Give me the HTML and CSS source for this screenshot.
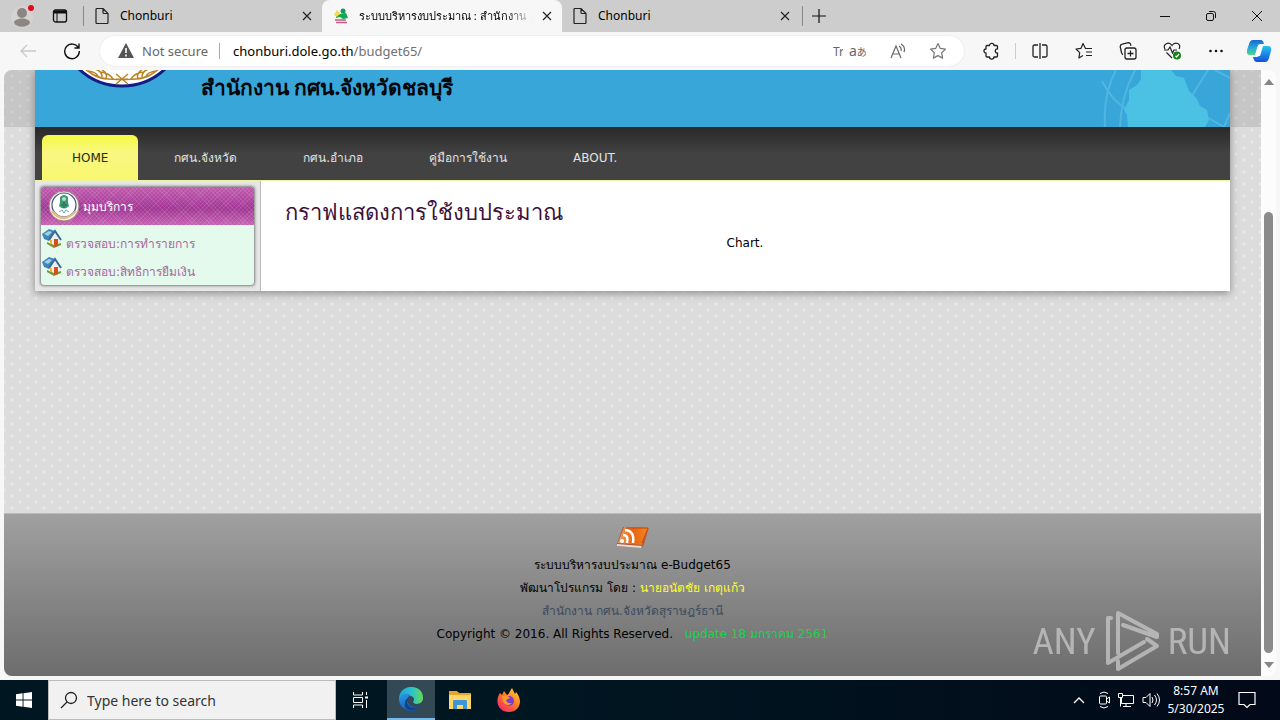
FILE: index.html
```html
<!DOCTYPE html>
<html lang="th">
<head>
<meta charset="utf-8">
<title>ระบบบริหารงบประมาณ</title>
<link rel="stylesheet" href="styles.css">
</head>
<body>
<div class="tabbar">
  <button class="profile" aria-label="Profile"><svg width="24" height="26" viewBox="0 0 24 26"><circle cx="12" cy="14" r="11" fill="#d6d2cf"/><circle cx="12" cy="10" r="5" fill="#8b8684"/><path d="M4 20c0-6 16-6 16 0-3 5-13 5-16 0z" fill="#8b8684"/><circle cx="21" cy="5" r="3" fill="#e00b1c"/></svg></button>
  <button class="spaces" aria-label="Tab actions"><svg width="16" height="16" viewBox="0 0 16 16" fill="none" stroke="#111"><rect x="1.500" y="2" width="13" height="12" rx="2" stroke-width="1.300"/><path d="M1.500 4h13" stroke-width="3"/><path d="M5 5v9"/></svg></button>
  <span class="sep"></span>
  <div class="tab first"><svg class="fav" width="16" height="16" viewBox="0 0 16 16" fill="none" stroke="#222" stroke-width="1.200"><path d="M2 1.500q0-1 1-1h6l5 5v9q0 1-1 1H3q-1 0-1-1zM9 .5v4q0 1 1 1h4"/></svg><span class="label">Chonburi</span><button aria-label="Close tab"><svg width="10" height="10" viewBox="0 0 10 10" stroke="#222" stroke-width="1.200"><path d="M1 1l8 8M9 1L1 9"/></svg></button></div>
  <div class="tab active"><svg class="fav" width="16" height="16" viewBox="0 0 16 16"><circle cx="10" cy="3" r="2.500" fill="#159a55"/><path d="M3 8c4-2 6-3 10-3l2 5-5 1-3-2-4 1z" fill="#15a557"/><path d="M1 7l3-5 3 3-3 4z" fill="#f2dd44"/><path d="M2 12h11M3 14.500h11" stroke="#c45b82" stroke-width="1.500"/></svg><span class="label">ระบบบริหารงบประมาณ : สำนักงาน กศน</span><button aria-label="Close tab"><svg width="10" height="10" viewBox="0 0 10 10" stroke="#222" stroke-width="1.200"><path d="M1 1l8 8M9 1L1 9"/></svg></button></div>
  <div class="tab"><svg class="fav" width="16" height="16" viewBox="0 0 16 16" fill="none" stroke="#222" stroke-width="1.200"><path d="M2 1.500q0-1 1-1h6l5 5v9q0 1-1 1H3q-1 0-1-1zM9 .5v4q0 1 1 1h4"/></svg><span class="label">Chonburi</span><button aria-label="Close tab"><svg width="10" height="10" viewBox="0 0 10 10" stroke="#222" stroke-width="1.200"><path d="M1 1l8 8M9 1L1 9"/></svg></button></div>
  <span class="sep"></span>
  <button class="newtab" aria-label="New tab"><svg width="14" height="14" viewBox="0 0 14 14" stroke="#111" stroke-width="1.200"><path d="M7 0v14M0 7h14"/></svg></button>
  <div class="wincontrols">
    <button aria-label="Minimize"><svg width="12" height="12" viewBox="0 0 12 12"><path d="M1 6.500h10" stroke="#111"/></svg></button>
    <button aria-label="Restore"><svg width="12" height="12" viewBox="0 0 12 12" fill="none" stroke="#111"><rect x="1.500" y="3.500" width="7" height="7" rx="1.500"/><path d="M4 1.500h4.500q2 0 2 2V8"/></svg></button>
    <button aria-label="Close"><svg width="12" height="12" viewBox="0 0 12 12" stroke="#111"><path d="M1 1l10 10M11 1L1 11"/></svg></button>
  </div>
</div>

<div class="toolbar">
  <button aria-label="Back"><svg width="18" height="16" viewBox="0 0 18 16" fill="none" stroke="#c8c8c8" stroke-width="1.300"><path d="M17 8H2M8 2L2 8l6 6"/></svg></button>
  <button aria-label="Refresh"><svg width="18" height="18" viewBox="0 0 18 18" fill="none" stroke="#111" stroke-width="1.400"><path d="M15.500 6A7.300 7.300 0 1 0 16.300 9M16 1.500V6h-4.500"/></svg></button>
  <div class="address">
    <svg width="16" height="16" viewBox="0 0 16 16"><path d="M8 0l8 15H0z" fill="#555" stroke-linejoin="round"/><path d="M8 5v5M8 11.500v2" stroke="#fff" stroke-width="1.600"/></svg>
    <span class="notsecure">Not secure</span><span class="bar"></span>
    <span class="url">chonburi.dole.go.th<span>/budget65/</span></span>
    <span class="clip">Tr</span>
    <span class="translate">a<small>あ</small></span>
    <svg class="read" width="17" height="16" viewBox="0 0 17 16" fill="none" stroke="#666" stroke-width="1.200"><path d="M1 15L6 3l5 12M3 11h6M9 3q3 2 2 5M11 1q5 3 3 8"/></svg>
    <svg width="18" height="18" viewBox="0 0 18 18" fill="none" stroke="#777" stroke-width="1.200" stroke-linejoin="round"><path d="M9 1.500l2.300 4.900 5.200.7-3.800 3.700.9 5.300L9 13.600l-4.600 2.500.9-5.300L1.500 7.100l5.200-.7z"/></svg>
  </div>
  <div class="tools">
    <button aria-label="Extensions"><svg width="18" height="18" viewBox="0 0 18 18" fill="none" stroke="#222" stroke-width="1.300" stroke-linejoin="round"><path d="M4 3.500h2.500C6.500.7 11 .7 11 3.500h2.500q1 0 1 1V7c-3-.5-3 4.500 0 4v3q0 1-1 1H11c0 2.700-4.500 2.700-4.500 0H4q-1 0-1-1v-3c-2.700 0-2.700-4 0-4V4.500q0-1 1-1z"/></svg></button>
    <span class="bar"></span>
    <button aria-label="Split screen"><svg width="18" height="18" viewBox="0 0 18 18" fill="none" stroke="#222" stroke-width="1.300"><path d="M7 3H3.500Q2 3 2 4.500v9Q2 15 3.500 15H7M11 3h3.500Q16 3 16 4.500v9q0 1.500-1.500 1.500H11M9 1v16"/></svg></button>
    <button aria-label="Favorites"><svg width="18" height="18" viewBox="0 0 18 18" fill="none" stroke="#222" stroke-width="1.200" stroke-linejoin="round"><path d="M17 6.500h-6.500L8 1.500 6 6.300l-5 .7 3.700 3.600-.8 5.400L8 13.500M11 10h6M11 13.500h6"/></svg></button>
    <button aria-label="Collections"><svg width="18" height="18" viewBox="0 0 18 18" fill="none" stroke="#222" stroke-width="1.300"><rect x="6" y="6" width="11" height="11" rx="2"/><path d="M11.500 8.500v6M8.500 11.500h6M4 12.500q-1 0-1.500-2L1.200 4.700q0-2 2-2.500l6-1.500q2 0 2.500 2l.3 1"/></svg></button>
    <button aria-label="Performance"><svg width="18" height="18" viewBox="0 0 18 18" fill="none" stroke="#222" stroke-width="1.200"><path d="M2 7C-1 2 6-1 9 3.500c3-4.500 10-2 7 3.500M3.500 10.500L9 16M1 8h4l2-3 2.500 6L11 8h3"/><circle cx="14" cy="13.500" r="4" fill="#16801b" stroke="none"/><path d="M12.500 14l1 1 2.500-3" stroke="#fff"/></svg></button>
    <button aria-label="Settings and more"><svg width="18" height="18" viewBox="0 0 18 18" fill="#111"><circle cx="3.500" cy="9" r="1.300"/><circle cx="9" cy="9" r="1.300"/><circle cx="14.500" cy="9" r="1.300"/></svg></button>
    <button class="copilot" aria-label="Copilot"><svg width="26" height="24" viewBox="0 0 26 24"><defs><linearGradient id="ca" x2="0" y2="1"><stop stop-color="#1967d2"/><stop offset=".5" stop-color="#24a8d8"/><stop offset="1" stop-color="#52d48a"/></linearGradient><linearGradient id="cb" x2="0" y2="1"><stop stop-color="#27c4ee"/><stop offset="1" stop-color="#1450dc"/></linearGradient></defs><path d="M7 1h8q2 0 3 4h-4q-2 0-3 4l-2 7H4q-4 0-3-5l2-6q1-4 4-4z" fill="url(#ca)"/><path d="M19 23h-8q-3 0-4-5h4q2 0 3-4l2-7h6q4 0 3 5l-2 7q-1 4-4 4z" fill="url(#cb)"/><path d="M14 7h3l-3 10h-4z" fill="#fff"/></svg></button>
  </div>
</div>

<div class="viewport">
  <div class="page">
    <div class="wrap">
      <header class="banner">
        <svg class="seal" width="120" height="18" viewBox="0 0 120 18"><circle cx="60" cy="-47" r="63" fill="#fff" stroke="#151c83" stroke-width="3"/><g fill="none" stroke="#b98524" stroke-width="1.500"><path d="M24 0Q38 12 66 9M96 0Q82 12 54 9M54 14L66 4M66 14L54 4M26 1q8 1 10 5M33-1q7 2 7 8M40 0q6 3 4 9M38 2q10 1 14 8M30 4q8 5 16 5M94 1q-8 1-10 5M87-1q-7 2-7 8M80 0q-6 3-4 9M82 2q-10 1-14 8M90 4q-8 5-16 5"/></g></svg>
        <h1>สำนักงาน กศน.จังหวัดชลบุรี</h1>
        <svg class="map" width="134" height="57" viewBox="0 0 134 57"><g fill="none" stroke="#51b5e2" stroke-width="2"><path d="M6 11q10 20 26 29M20 0Q7 24 9 57M39 0Q25 26 24 57M112 0L94 29M119 0l15 8M106 44l22 13 6-14"/></g><path d="M45 0h30l5 6 8 2 5 13 8 8 3 7 7 4 2 10-4 7H32l-1-12-3-5 5-10 0-10 8-5 4-6z" fill="#4bc2e3"/></svg>
      </header>
      <nav class="menu">
        <a class="current" href="#">HOME</a><a href="#">กศน.จังหวัด</a><a href="#">กศน.อำเภอ</a><a href="#">คู่มือการใช้งาน</a><a href="#">ABOUT.</a>
      </nav>
      <div class="columns">
        <aside class="side">
          <section class="service">
            <h2><svg width="32" height="32" viewBox="0 0 32 32"><circle cx="16" cy="16" r="15" fill="#faf5ee" stroke="#a08773"/><circle cx="16" cy="15" r="12" fill="#fff" stroke="#44548b" stroke-width="1.200"/><path d="M4 21q11 14 24 0" fill="none" stroke="#e3bd92" stroke-width="2.500"/><path d="M12 7q4-4 8 0v5l1 4q-5 5-10 0l1-4z" fill="#3c9a76"/><circle cx="16" cy="9" r="2" fill="#b9ddc2"/><path d="M16 12v6M14 14v2M18 14v2" stroke="#20654e"/><path d="M11 22l3-2 2 3 2-3 3 2" fill="none" stroke="#6aa5c8"/></svg>มุมบริการ</h2>
            <ul>
              <li><svg width="20" height="20" viewBox="0 0 20 20"><path d="M6 10l7-5 6 6v6l-7 3-7-4z" fill="#f1eee5"/><path d="M5 16l7 4 7-3v-2l-7 2-7-3z" fill="#6f9c3c"/><path d="M0 6l7-5 6 2-6 10-5-2z" fill="#3f86bb"/><path d="M2 6l5-3 3 1-4 4z" fill="#9fd0e6"/><path d="M7 12l6-9 6 9" fill="none" stroke="#356c98" stroke-width="2"/><path d="M12 11h4v7l-4 1z" fill="#d6501f"/><path d="M8 12h2v4H8z" fill="#f5b534"/></svg><a href="#">ตรวจสอบ:การทำรายการ</a></li>
              <li><svg width="20" height="20" viewBox="0 0 20 20"><path d="M6 10l7-5 6 6v6l-7 3-7-4z" fill="#f1eee5"/><path d="M5 16l7 4 7-3v-2l-7 2-7-3z" fill="#6f9c3c"/><path d="M0 6l7-5 6 2-6 10-5-2z" fill="#3f86bb"/><path d="M2 6l5-3 3 1-4 4z" fill="#9fd0e6"/><path d="M7 12l6-9 6 9" fill="none" stroke="#356c98" stroke-width="2"/><path d="M12 11h4v7l-4 1z" fill="#d6501f"/><path d="M8 12h2v4H8z" fill="#f5b534"/></svg><a href="#">ตรวจสอบ:สิทธิการยืมเงิน</a></li>
            </ul>
          </section>
        </aside>
        <main>
          <h2>กราฟแสดงการใช้งบประมาณ</h2>
          <p>Chart.</p>
        </main>
      </div>
    </div>
    <footer>
      <svg width="34" height="24" viewBox="0 0 34 24"><defs><linearGradient id="r" x2="1"><stop stop-color="#f0a060"/><stop offset=".5" stop-color="#e96511"/><stop offset="1" stop-color="#f18b20"/></linearGradient></defs><path d="M1 18L7 1h26l-5 17-2 4L1 20z" fill="#a9573c"/><path d="M2 17L8 1h25l-7 18z" fill="url(#r)"/><path d="M10 2h22l-6 15" fill="none" stroke="#c8440b"/><path d="M1 18l25 2-1 2L1 20z" fill="#eadbd4"/><g fill="none" stroke="#fff" stroke-width="2.500"><path d="M7 9q6 0 4 8M9 4q10 1 8 13"/></g><circle cx="6" cy="15" r="2" fill="#fff"/></svg>
      <p>ระบบบริหารงบประมาณ e-Budget65</p>
      <p>พัฒนาโปรแกรม โดย : <span class="author">นายอนัตชัย เกตุแก้ว</span></p>
      <p class="office">สำนักงาน กศน.จังหวัดสุราษฎร์ธานี</p>
      <p>Copyright © 2016. All Rights Reserved. <span class="update">update 18 มกราคม 2561</span></p>
    </footer>
  </div>
  <div class="scrollbar"><span class="up"></span><span class="thumb"></span><span class="down"></span></div>
  <div class="watermark"><span>ANY</span><svg width="56" height="62" viewBox="0 0 56 62" fill="none" stroke="currentColor" stroke-width="4" stroke-linejoin="round" stroke-linecap="round"><path d="M14 43V3l39 21v3L19 15M7 8H4v45l36-21M14 51v8l39-23-10-7"/></svg><span>RUN</span></div>
</div>

<div class="taskbar">
  <button class="start" aria-label="Start"><svg width="16" height="16" viewBox="0 0 16 16" fill="#fff"><path d="M0 2.200L6.600 1.300v6.200H0zM7.500 1.200L16 0v7.500H7.500zM0 8.400h6.600v6.300L0 13.800zM7.500 8.400H16V16l-8.500-1.200z"/></svg></button>
  <label class="search"><svg width="18" height="18" viewBox="0 0 18 18" fill="none" stroke="#222" stroke-width="1.300"><circle cx="11" cy="7" r="5.500"/><path d="M7 11l-6 6"/></svg><input type="text" placeholder="Type here to search" aria-label="Type here to search"></label>
  <button class="app" aria-label="Task view"><svg width="18" height="18" viewBox="0 0 18 18" fill="none" stroke="#fff"><path d="M1.500 1v3h9V1M1.500 17v-3h9v3M1.500 6.500h9v5h-9zM14.500 1v3M14.500 9v8"/><path d="M13 6.500h3" stroke-width="2"/></svg></button>
  <button class="app on" aria-label="Microsoft Edge"><svg width="24" height="24" viewBox="0 0 24 24"><defs><linearGradient id="ea"><stop stop-color="#23a5dc"/><stop offset=".55" stop-color="#2cc3cb"/><stop offset="1" stop-color="#68da52"/></linearGradient><linearGradient id="eb" x2=".5" y2="1"><stop stop-color="#2b9de8"/><stop offset="1" stop-color="#125bb5"/></linearGradient></defs><path d="M0 12C0-4 24-4 24 11c0 7-9 7-10 4 2-2 1-6-3-6C5 8 1 10 0 14z" fill="url(#ea)"/><path d="M0 12c2-6 9-7 12-3-4 0-5 4-3 7 2 4 7 5 12 3-4 6-11 6-15 3C2 20 0 16 0 12z" fill="url(#eb)"/><path d="M9 12c-3 7 5 11 12 7-5 7-17 5-15-3 0-3 1-4 3-4z" fill="#12458c"/></svg></button>
  <button class="app" aria-label="File Explorer"><svg width="22" height="20" viewBox="0 0 22 20"><path d="M0 1h8l2 2h12v16H0z" fill="#e8a52b"/><path d="M0 5h22v14H0z" fill="#ffd766"/><path d="M4 19v-8q0-1 1-1h12q1 0 1 1v8h-4v-4H8v4z" fill="#3f95d7"/></svg></button>
  <button class="app" aria-label="Firefox"><svg width="24" height="24" viewBox="0 0 24 24"><defs><linearGradient id="f" x1="1" x2=".2" y2="1"><stop stop-color="#ffe33d"/><stop offset=".5" stop-color="#ff7b25"/><stop offset="1" stop-color="#f4266c"/></linearGradient></defs><path d="M3 5l2 2 2-4 3 4c2-1 3-4 5-7l3 6 1-2c8 9 3 20-7 20S-3 14 3 5z" fill="url(#f)"/><circle cx="12" cy="13" r="5" fill="#7b3fcc"/><path d="M5 8q6-1 8 2l-4 2q1 4 6 3-5 5-9-1z" fill="#ff9a20"/></svg></button>
  <div class="tray">
    <svg width="12" height="8" viewBox="0 0 12 8" fill="none" stroke="#fff" stroke-width="1.300"><path d="M1 7l5-5 5 5"/></svg>
    <svg width="12" height="18" viewBox="0 0 12 18" fill="none" stroke="#fff"><rect x="1.500" y="5" width="7" height="8" rx="1"/><path d="M8.500 8l3-2v6l-3-2M2 2.500q4-3 8 0M2 15.500q4 3 8 0"/></svg>
    <svg width="18" height="16" viewBox="0 0 18 16" fill="none" stroke="#fff"><path d="M5 3.500h11.500v8H4.500V6M9 11.500v3M6 14.500h8M1.500 1.500h4v4h-4zM3.500 5.500v9"/></svg>
    <svg width="18" height="16" viewBox="0 0 18 16" fill="none" stroke="#fff"><path d="M1 5.500h3l4-4v13l-4-4H1zM10 5q2 3 0 6M12.500 3q4 5 0 10M15 1.500q5 6.500 0 13"/></svg>
    <div class="clock">8:57 AM<br>5/30/2025</div>
    <svg class="note" width="18" height="18" viewBox="0 0 18 18" fill="none" stroke="#fff" stroke-width="1.200"><path d="M1 1.500h16v12h-5l-3 3-3-3H1z"/></svg>
  </div>
</div>
</body>
</html>
```
FILE: styles.css
```css
* { box-sizing: border-box; }
body { margin: 0; height: 100vh; display: flex; flex-direction: column; overflow: hidden; background: #f7f7f7; font-family: "Noto Sans", "Open Sans", sans-serif; font-size: 12px; color: #000; }
button { border: 0; padding: 0; background: none; display: flex; align-items: center; justify-content: center; flex: none; }
h1, h2, p, ul { margin: 0; padding: 0; font-weight: 400; }
a { text-decoration: none; color: inherit; }
svg { flex: none; display: block; }

.tabbar { height: 32px; flex: none; display: flex; align-items: center; background: #cdcdcd; }
.profile { width: 24px; margin-left: 10px; }
.spaces { width: 16px; margin: 0 15px 0 18px; }
.sep { width: 1px; height: 20px; background: #888; flex: none; }
.tab { width: 240px; height: 32px; display: flex; align-items: center; gap: 10px; padding: 0 12px 0 10px; font-size: 12px; }
.tab.first { width: 238px; padding: 0 10px; }
.tab.active { background: #f7f7f7; border-radius: 8px 8px 0 0; padding: 0 10px 0 11px; }
.tab .label { flex: 1; min-width: 0; overflow: hidden; white-space: nowrap; line-height: 24px; }
.tab.active .label { font-size: 11px; mask-image: linear-gradient(90deg, #000 85%, transparent); }
.newtab { width: 32px; }
.wincontrols { display: flex; margin-left: auto; }
.wincontrols button { width: 46px; height: 32px; }

.toolbar { height: 38px; flex: none; display: flex; align-items: center; }
.toolbar > button { width: 44px; }
.toolbar > button:first-child { margin-left: 6px; }
.address { flex: 1; height: 30px; margin-left: 6px; border-radius: 15px; background: #fff; display: flex; align-items: center; padding: 0 17px 0 18px; box-shadow: 0 0 2px #ddd; font-size: 13px; color: #666; }
.notsecure { margin-left: 8px; }
.bar { width: 1px; height: 16px; background: #aaa; margin: 0 13px 0 11px; flex: none; }
.url { color: #000; flex: 1; }
.url span { color: #707070; }
.clip { width: 10px; overflow: hidden; margin-right: 6px; font-size: 12px; }
.translate { font-size: 14px; line-height: 20px; width: 18px; margin-right: 23px; white-space: nowrap; }
.translate small { font: 10px "Noto Sans CJK JP", sans-serif; }
.read { margin-right: 22px; }
.tools { display: flex; align-items: center; margin-left: 6px; }
.tools button { width: 44px; }
.tools .bar { margin: 0 2px 0 1px; background: #ccc; }
.tools .copilot { width: 42px; }

.viewport { flex: 1; min-height: 0; margin: 0 4px 4px; display: flex; position: relative; border-radius: 8px; overflow: hidden; }
.page { flex: 1; min-width: 0; display: flex; flex-direction: column; background-color: #dcdcdc; background-image: linear-gradient(#0000001a, #0000001a), radial-gradient(circle, #e8e8e8 1px, transparent 2px), radial-gradient(circle, #e8e8e8 1px, transparent 2px); background-size: 100% 57px, 16px 12px, 16px 12px; background-position: 0 0, 0 0, 8px 6px; background-repeat: no-repeat, repeat, repeat; font: 12px "DejaVu Sans", "Noto Sans", sans-serif; }
.wrap { margin: 0 31px; background: #fff; box-shadow: 0 2px 8px #888; }
.banner { height: 57px; background: #39a6da; display: flex; align-items: flex-start; overflow: hidden; }
.seal { margin-left: 27px; }
.banner h1 { font: 700 21px/34px "Noto Sans", sans-serif; margin-left: 19px; color: #00060c; white-space: nowrap; }
.map { margin-left: auto; }
.menu { height: 53px; padding: 8px 7px 0; display: flex; background: linear-gradient(#292929, #424242 50%); }
.menu a { padding: 0 33px; line-height: 47px; color: #e2e2e2; white-space: nowrap; }
.menu .current { padding: 0 30px; margin-right: 3px; background: linear-gradient(#f6fa42, #f9f783 40%, #f9f76e); color: #282d05; border-radius: 6px 6px 0 0; }
.columns { display: flex; border-top: 1px solid #edf4a1; min-height: 110px; }
.side { width: 226px; padding: 5px; background: #e7e7e7; border-right: 1px solid #bbb; flex: none; }
.service { border: 1px solid #9e9da0; border-radius: 4px; overflow: hidden; background: #e3faed; box-shadow: 0 0 3px #888; }
.service h2 { height: 38px; display: flex; align-items: center; gap: 3px; padding-left: 7px; color: #fff; font-size: 12px; background: repeating-linear-gradient(45deg, #ffffff18 0 1px, transparent 1px 3px), repeating-linear-gradient(-45deg, #ffffff18 0 1px, transparent 1px 3px), linear-gradient(#bf5bac, #a6389a 50%, #a03692 58%, #c561b2); }
.service ul { list-style: none; padding: 3px 1px 1px; }
.service li { display: flex; height: 28px; gap: 4px; color: #aa669d; line-height: 32px; white-space: nowrap; }
main { flex: 1; padding: 14px 24px; }
main h2 { font-size: 22px; line-height: 36px; color: #3c1138; }
main p { text-align: center; line-height: 24px; margin-right: 1px; }
footer { margin-top: auto; height: 163px; border-top: 1px solid #bbb; background: linear-gradient(#a0a0a0, #6d6d6d); padding-top: 12px; text-align: center; }
footer svg { margin: 0 auto 4px; }
footer p { line-height: 23px; height: 23px; white-space: nowrap; }
.author { color: #ffff26; }
.office { color: #3c4a5c; }
.update { color: #15d54b; margin-left: 8px; }

.scrollbar { width: 15px; background: #fcfcfc; display: flex; flex-direction: column; align-items: center; padding: 9px 0 8px; flex: none; }
.up, .down { border: 5px solid transparent; border-top: 0; border-bottom: 6px solid #858585; }
.down { border-bottom: 0; border-top: 6px solid #858585; margin-top: 9px; }
.thumb { width: 9px; flex: 1; margin-top: 127px; background: #8b8b8b; border-radius: 5px; }
.watermark { position: absolute; right: 45px; bottom: 4px; display: flex; align-items: center; gap: 8px; color: #c4c4c4; font: 37px "Liberation Sans Narrow", "Roboto Condensed", "Open Sans Condensed", "DejaVu Sans Condensed", sans-serif; opacity: .8; }

.taskbar { height: 40px; flex: none; display: flex; background: linear-gradient(90deg, #001620, #001722 40%, #020918); color: #fff; }
.start { width: 48px; }
.search { width: 288px; background: #f1f1f1; border: 1px solid #bbb; display: flex; align-items: center; gap: 9px; padding-left: 11px; }
.search input { flex: 1; min-width: 0; border: 0; background: none; font: 14px "Noto Sans", sans-serif; outline: 0; padding: 0; }
.search input::placeholder { color: #333; opacity: 1; }
.app { width: 49px; }
.app.on { background: #334955; border-bottom: 2px solid #76b9ed; margin-left: 2px; width: 48px; }
.tray { margin-left: auto; display: flex; align-items: center; padding-right: 24px; gap: 7px; }
.tray > svg:first-child { margin-right: 6px; }
.clock { width: 58px; text-align: center; line-height: 18px; font-size: 12px; white-space: nowrap; }
.note { margin-left: 6px; }
```
